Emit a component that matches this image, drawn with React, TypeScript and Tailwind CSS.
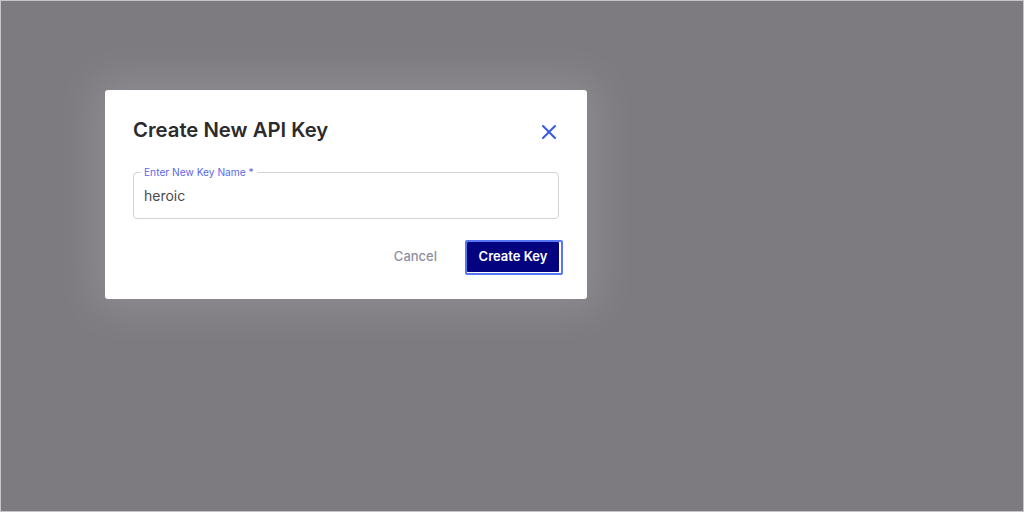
import { X } from 'lucide-react';

export default function App() {
  return (
    <div
      className="h-screen w-full bg-[#7e7b80] border border-[#c6c6c8] pt-[89px] pl-[104px]"
      style={{ fontFamily: 'Inter, "Noto Sans", sans-serif' }}
    >
      {/* Modal */}
      <div className="w-[482px] h-[209px] bg-white rounded-[3px] pt-[26px] px-[28px] pb-[24px] shadow-[0_0_40px_10px_rgba(255,255,255,0.14)]">
        <div className="flex items-center justify-between">
          <h2 className="text-[20.3px] leading-[28px] font-semibold text-[#2b2b2e]">Create New API Key</h2>
          <button className="-mr-[2px] mt-[4px] text-[#3d5ae6]">
            <X className="h-[24px] w-[24px]" strokeWidth={2.1} />
          </button>
        </div>

        {/* Key name field */}
        <div className="relative mt-[28px] h-[47px] border border-[#d3d3d6] rounded-[4px] flex items-center pl-[10px]">
          <span className="absolute -top-[8px] left-[7px] bg-white px-[3px] text-[10.2px] leading-[14px] text-[#5d68e8]">
            Enter New Key Name *
          </span>
          <span className="text-[14px] text-[#4a4a50]">heroic</span>
        </div>

        {/* Actions */}
        <div className="mt-[21px] -mr-[4px] flex items-center justify-end gap-[28px]">
          <button className="text-[13px] font-medium text-[#8e8fa0] -mt-[2px]">Cancel</button>
          <div className="border-2 border-[#5676f6] rounded-[2px] h-[35px] w-[98px]">
            <button className="h-[30px] w-[92px] bg-[#03037f] text-white text-[13px] font-semibold rounded-[1px]">
              Create Key
            </button>
          </div>
        </div>
      </div>
    </div>
  );
}
